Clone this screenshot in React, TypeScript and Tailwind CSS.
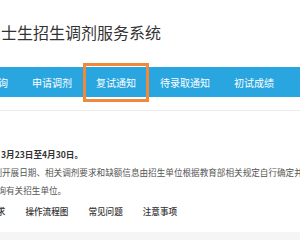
import React from 'react';

const navItems = ['查询', '申请调剂', '复试通知', '待录取通知', '初试成绩'];
const tabs = ['调剂要求', '操作流程图', '常见问题', '注意事项'];

const App = () => {
  return (
    <div
      className="w-[300px] h-[240px] overflow-hidden bg-white"
      style={{ fontFamily: '"Noto Sans CJK SC", "Noto Sans", sans-serif' }}
    >
      {/* Header */}
      <div className="h-[67px] pt-[20px] pl-[1px]">
        <h1 className="text-[16px] leading-[24px] text-[#333] whitespace-nowrap">士生招生调剂服务系统</h1>
      </div>

      {/* Main navigation */}
      <nav className="h-[30px] bg-[#29a6df]">
        <ul className="flex h-full ml-[-24px] whitespace-nowrap">
          {navItems.map((item) => (
            <li key={item} className="relative flex items-center px-[12px] text-[10px] text-white">
              {item}
              {item === '复试通知' && (
                <span className="absolute -left-px -right-px top-[-4px] bottom-[-5px] border-[3px] border-[#f08a3a]" />
              )}
            </li>
          ))}
        </ul>
      </nav>

      <div className="h-[13px]" />
      <div className="h-px bg-[#ebebeb]" />

      {/* Notice text */}
      <div className="pt-[34px] text-[8.6px] leading-[18px] whitespace-nowrap">
        <p className="pl-[1px] font-bold text-[#333]">3月23日至4月30日。</p>
        <p className="ml-[-6.6px] text-[#555]">剂开展日期、相关调剂要求和缺额信息由招生单位根据教育部相关规定自行确定并</p>
        <p className="ml-[-2.6px] text-[#555]">询有关招生单位。</p>
      </div>

      {/* Tabs */}
      <div className="flex gap-[20px] mt-[3px] ml-[-29px] h-[18px] items-center text-[8.6px] font-medium text-[#333] whitespace-nowrap">
        {tabs.map((t) => (
          <span key={t}>{t}</span>
        ))}
      </div>

      <div className="mt-[12px] h-[10px] bg-[#f5f5f5]" />
    </div>
  );
};

export default App;
